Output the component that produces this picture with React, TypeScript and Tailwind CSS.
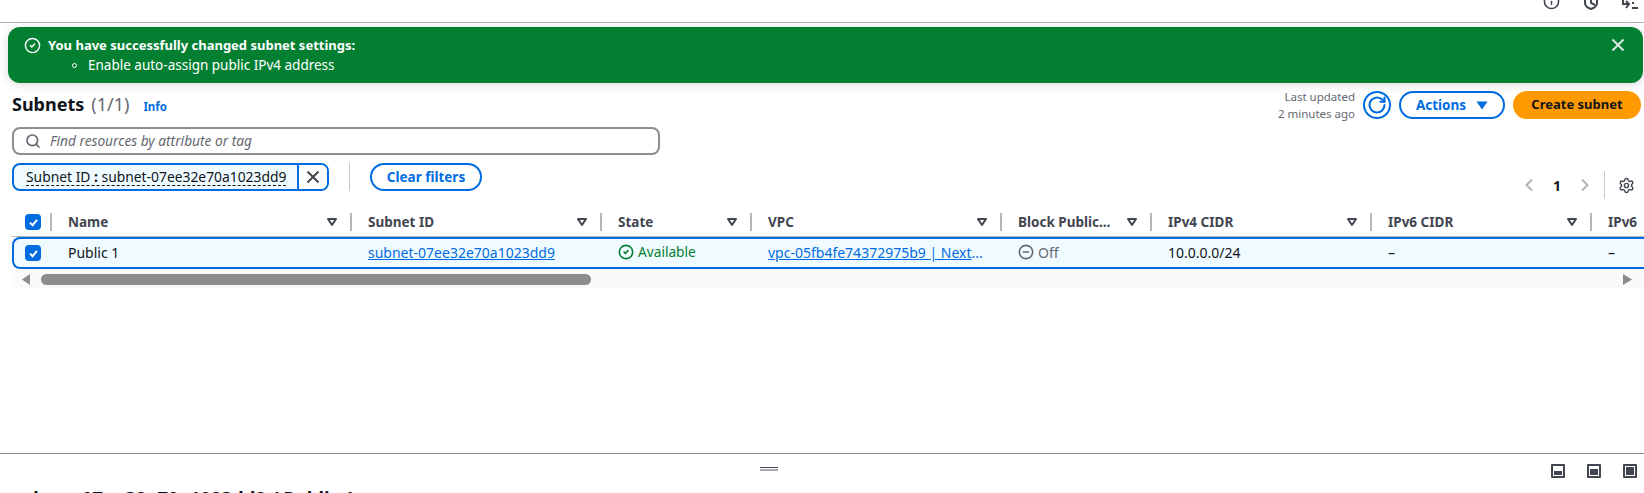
import { Search, Settings, RotateCw, CircleCheck, CircleMinus, Info } from 'lucide-react';

const font = "font-['Noto_Sans','Open_Sans',sans-serif]";

const headerGrid = 'grid grid-cols-[38px_300px_250px_150px_250px_150px_220px_220px_1fr]';
const rowGrid = 'grid grid-cols-[36px_300px_250px_150px_250px_150px_220px_220px_1fr]';

const headers = ['Name', 'Subnet ID', 'State', 'VPC', 'Block Public...', 'IPv4 CIDR', 'IPv6 CIDR', 'IPv6'];

const CloseIcon = ({ className }: { className?: string }) => (
  <svg width="14" height="14" viewBox="0 0 14 14" className={className}>
    <path d="M1.5 1.5l11 11M12.5 1.5l-11 11" fill="none" stroke="currentColor" strokeWidth="2" />
  </svg>
);

const FilterCaret = () => (
  <svg width="12" height="10" viewBox="0 0 12 10" className="shrink-0">
    <path d="M2 2h8L6 8z" fill="none" stroke="#424650" strokeWidth="2" strokeLinejoin="round" />
  </svg>
);

const Chevron = ({ flip }: { flip?: boolean }) => (
  <svg width="10" height="14" viewBox="0 0 10 14" className={flip ? 'rotate-180' : ''}>
    <path d="M8 1.5 2.5 7 8 12.5" fill="none" stroke="#b4b4bb" strokeWidth="2" />
  </svg>
);

const Checkbox = () => (
  <span className="w-4 h-4 rounded-[4px] bg-[#006ce0] flex items-center justify-center shrink-0">
    <svg width="11" height="11" viewBox="0 0 11 11">
      <path d="M2 5.6 4.6 8.2 9 2.8" fill="none" stroke="white" strokeWidth="2" />
    </svg>
  </span>
);

const PanelIcon = ({ fill }: { fill: string }) => (
  <span className="w-[14px] h-[14px] border-2 border-[#424650] rounded-[1px] p-px flex flex-col justify-end">
    <span className={`bg-[#424650] ${fill}`} />
  </span>
);

export default function App() {
  return (
    <div className={`w-[1644px] h-[493px] overflow-hidden bg-white flex flex-col text-[14px] text-[#0f141a] ${font}`}>
      <div className="h-[23px] shrink-0 border-b border-[#b4b4bb] flex justify-end items-end overflow-hidden pr-[6px] gap-[23px]">
        <Info size={17} strokeWidth={2.2} className="text-[#424650] mb-[12px] shrink-0" />
        <svg width="16" height="16" viewBox="0 0 16 16" className="mb-[12px] shrink-0">
          <path d="M2 3 8 1l6 2v6c0 3-3 5-6 6-3-1-6-3-6-6z" fill="none" stroke="#424650" strokeWidth="2" />
          <path d="M8 5v4l4 2" fill="none" stroke="#424650" strokeWidth="2" />
        </svg>
        <svg width="16" height="16" viewBox="0 0 16 16" className="mb-[12px] shrink-0">
          <path d="M1 2v8h5M4 14l3-4-3-3M10 9h2M10 14h6" fill="none" stroke="#424650" strokeWidth="2" />
        </svg>
      </div>

      <div className="ml-[8px] mr-px mt-[4px] h-[56px] shrink-0 rounded-[12px] bg-[#037f32] text-white flex justify-between pl-[16px] pr-[18px] pt-[8px] shadow-[0_2px_10px_rgba(0,0,0,0.15)]">
        <div className="flex items-start gap-[7px]">
          <CircleCheck size={17} className="mt-[2px]" />
          <div className="leading-[20px]">
            <div className="font-bold text-[13px]">You have successfully changed subnet settings:</div>
            <div className="flex items-center gap-[11px] ml-[24px] text-[13.5px]">
              <span className="w-[5px] h-[5px] rounded-full border border-white" />
              <span>Enable auto-assign public IPv4 address</span>
            </div>
          </div>
        </div>
        <CloseIcon className="mt-[3px] text-[#dfe8e2]" />
      </div>

      <div className="flex justify-between items-center pl-[12px] pr-[3px] mt-[8px] h-[28px] shrink-0">
        <div className="flex items-baseline mb-[2px]">
          <span className="text-[18px] font-bold">Subnets</span>
          <span className="text-[18px] text-[#656871] ml-[7px]">(1/1)</span>
          <span className="text-[11.5px] font-bold text-[#006ce0] ml-[14px]">Info</span>
        </div>
        <div className="flex items-center gap-[8px]">
          <div className="text-[11.5px] leading-[17px] text-[#656871] text-right">
            <div>Last updated</div>
            <div>2 minutes ago</div>
          </div>
          <span className="w-[28px] h-[28px] rounded-full border-2 border-[#006ce0] flex items-center justify-center text-[#006ce0]">
            <RotateCw size={20} strokeWidth={2.5} />
          </span>
          <button className="w-[106px] h-[28px] rounded-full border-2 border-[#006ce0] text-[#006ce0] text-[13.5px] font-bold flex items-center justify-center gap-[10px]">
            Actions
            <svg width="12" height="9" viewBox="0 0 12 9"><path d="M0.5 0.5h11L6 8.5z" fill="#006ce0" /></svg>
          </button>
          <button className="w-[128px] h-[28px] rounded-full bg-[#ff9900] text-[13px] font-bold flex items-center justify-center">Create subnet</button>
        </div>
      </div>

      <div className="ml-[12px] mt-[8px] w-[648px] h-[28px] shrink-0 rounded-[8px] border-2 border-[#8c8c94] flex items-center gap-[9px] pl-[11px]">
        <Search size={16} strokeWidth={2.5} className="text-[#656871]" />
        <span className="italic text-[13.7px] text-[#656871]">Find resources by attribute or tag</span>
      </div>

      <div className="flex items-center justify-between pl-[12px] pr-[9px] mt-[8px] h-[28px] shrink-0">
        <div className="flex items-center">
          <div className="h-[28px] w-[317px] rounded-[8px] border-2 border-[#006ce0] bg-[#f0fbff] flex overflow-hidden">
            <span className="w-[285px] border-r-2 border-[#006ce0] flex items-center pl-[12px]">
              <span className="border-b border-dashed border-[#0f141a] text-[13.85px] leading-[16px] whitespace-nowrap">Subnet ID <b>:</b> subnet-07ee32e70a1023dd9</span>
            </span>
            <span className="flex-1 bg-white flex items-center justify-center"><CloseIcon className="text-[#424650]" /></span>
          </div>
          <span className="w-px h-[28px] bg-[#c6c6cd] ml-[20px] mr-[20px]" />
          <button className="w-[112px] h-[28px] rounded-full border-2 border-[#006ce0] text-[#006ce0] text-[13.5px] font-bold">Clear filters</button>
        </div>
        <div className="flex items-center mt-[16px]">
          <Chevron />
          <span className="font-bold w-[46px] text-center">1</span>
          <Chevron flip />
          <span className="w-px h-[28px] bg-[#c6c6cd] ml-[14px] mr-[13px]" />
          <Settings size={17} className="text-[#424650]" />
        </div>
      </div>

      <div className={`${headerGrid} ml-[12px] mt-[17px] h-[29px] shrink-0 items-center border-b border-[#b4b4bb] font-bold text-[13.5px] text-[#424650]`}>
        <div className="pl-[13px]"><Checkbox /></div>
        {headers.map(title => (
          <div key={title} className="flex items-center pr-[12px]">
            <span className="w-[2px] h-[18px] bg-[#b4b4bb] shrink-0" />
            <span className="ml-[16px] whitespace-nowrap">{title}</span>
            {title !== 'IPv6' && <span className="ml-auto"><FilterCaret /></span>}
          </div>
        ))}
      </div>

      <div className={`${rowGrid} ml-[12px] h-[32px] shrink-0 items-center pb-[2px] bg-[#f0fbff] border-2 border-r-0 border-[#006ce0] rounded-l-[8px]`}>
        <div className="pl-[11px] pt-[2px]"><Checkbox /></div>
        <div className="pl-[18px]">Public 1</div>
        <div className="pl-[18px]"><span className="text-[#006ce0] underline">subnet-07ee32e70a1023dd9</span></div>
        <div className="pl-[18px] flex items-center gap-[4px] text-[13.7px] text-[#037f32]">
          <CircleCheck size={16} strokeWidth={2.4} />
          Available
        </div>
        <div className="pl-[18px] whitespace-nowrap text-[#006ce0]">
          <span className="underline">vpc-05fb4fe74372975b9 | Next</span>...
        </div>
        <div className="pl-[18px] flex items-center gap-[4px] text-[#656871]">
          <CircleMinus size={16} strokeWidth={2.4} />
          Off
        </div>
        <div className="pl-[18px]">10.0.0.0/24</div>
        <div className="pl-[18px]">–</div>
        <div className="pl-[18px]">–</div>
      </div>

      <div className="ml-[12px] h-[19px] shrink-0 bg-[#fafafa] flex items-start pt-[5px] pl-[10px] pr-[10px]">
        <svg width="8" height="11" viewBox="0 0 8 11"><path d="M8 0v11L0 5.5z" fill="#8c8c8c" /></svg>
        <span className="ml-[11px] w-[550px] h-[11px] rounded-full bg-[#8c8c8c]" />
        <svg width="9" height="11" viewBox="0 0 9 11" className="ml-auto mr-[2px]"><path d="M0 0v11l9-5.5z" fill="#8c8c8c" /></svg>
      </div>

      <div className="mt-auto h-[40px] shrink-0 border-t border-[#8c8c94] overflow-hidden">
        <div className="flex items-start pt-[10px] pl-[760px] pr-[7px]">
          <div className="mt-[3px] w-[18px] flex flex-col gap-[1px]">
            <span className="h-px bg-[#424650]" />
            <span className="h-[2px] bg-[#a8a8b0]" />
          </div>
          <div className="ml-auto flex gap-[22px]">
            <PanelIcon fill="h-[4px]" />
            <PanelIcon fill="h-[6px]" />
            <PanelIcon fill="h-full" />
          </div>
        </div>
        <div className="mt-[8px] pl-[12px] text-[18.5px] leading-[24px] font-bold whitespace-nowrap">subnet-07ee32e70a1023dd9 / Public 1</div>
      </div>
    </div>
  );
}
